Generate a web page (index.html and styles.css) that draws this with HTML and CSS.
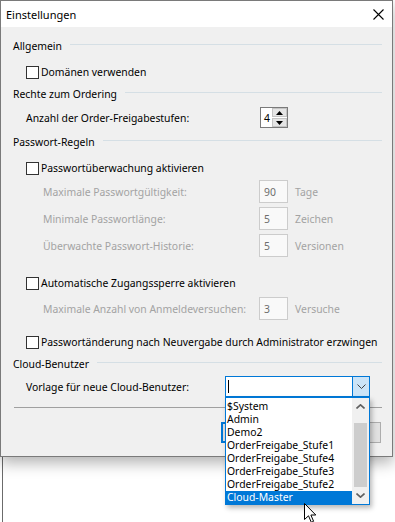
FILE: index.html
```html
<!DOCTYPE html>
<html lang="de">
<head>
<meta charset="UTF-8">
<title>Einstellungen</title>
<link rel="stylesheet" href="styles.css">
</head>
<body>
  <div class="backwin"></div>

  <div class="dialog">
    <div class="titlebar">
      <span>Einstellungen</span>
      <svg class="close" width="11" height="11" viewBox="0 0 11 11"><path d="M0.5 0.5 L10.5 10.5 M10.5 0.5 L0.5 10.5" stroke="#000" stroke-width="1.1" fill="none"/></svg>
    </div>

    <div class="content">
      <div class="row section mt9"><span>Allgemein</span><i class="rule"></i></div>
      <div class="row check mt6"><span class="box"></span>Domänen verwenden</div>

      <div class="row section mt2"><span>Rechte zum Ordering</span><i class="rule"></i></div>
      <div class="row plain spinrow mt3">
        <span class="lbl-wide">Anzahl der Order-Freigabestufen:</span>
        <div class="spin">
          <span class="spin-val">4</span>
          <div class="spin-btns">
            <span class="spin-btn"><svg width="7" height="4" viewBox="0 0 7 4"><path d="M0 4 L3.5 0 L7 4 Z" fill="#000"/></svg></span>
            <span class="spin-btn"><svg width="7" height="4" viewBox="0 0 7 4"><path d="M0 0 L3.5 4 L7 0 Z" fill="#000"/></svg></span>
          </div>
        </div>
      </div>

      <div class="row section mt4"><span>Passwort-Regeln</span><i class="rule"></i></div>
      <div class="row check mt6"><span class="box"></span>Passwortüberwachung aktivieren</div>
      <div class="row field mt2"><span class="lbl">Maximale Passwortgültigkeit:</span><span class="tbox">90</span><span class="unit">Tage</span></div>
      <div class="row field mt4"><span class="lbl">Minimale Passwortlänge:</span><span class="tbox">5</span><span class="unit">Zeichen</span></div>
      <div class="row field mt4"><span class="lbl">Überwachte Passwort-Historie:</span><span class="tbox">5</span><span class="unit">Versionen</span></div>

      <div class="row check mt16"><span class="box"></span>Automatische Zugangssperre aktivieren</div>
      <div class="row field mt4"><span class="lbl">Maximale Anzahl von Anmeldeversuchen:</span><span class="tbox">3</span><span class="unit">Versuche</span></div>

      <div class="row check mt12"><span class="box"></span>Passwortänderung nach Neuvergabe durch Administrator erzwingen</div>

      <div class="row section mt2"><span>Cloud-Benutzer</span><i class="rule"></i></div>
      <div class="row plain comborow mt2">
        <span class="lbl-combo">Vorlage für neue Cloud-Benutzer:</span>
        <div class="combo">
          <span class="combo-text"><i class="caret"></i></span>
          <span class="combo-btn"><svg width="9" height="5" viewBox="0 0 9 5"><path d="M0.5 0.5 L4.5 4.5 L8.5 0.5" stroke="#444" stroke-width="1" fill="none"/></svg></span>
        </div>
      </div>

      <div class="separator"></div>

      <!-- OK / Abbrechen, covered by the open list -->
      <div class="buttons">
        <span class="btn btn-default"></span>
        <span class="btn"></span>
      </div>
    </div>
  </div>

  <div class="droplist">
    <ul class="items">
      <li>$System</li>
      <li>Admin</li>
      <li>Demo2</li>
      <li>OrderFreigabe_Stufe1</li>
      <li>OrderFreigabe_Stufe4</li>
      <li>OrderFreigabe_Stufe3</li>
      <li>OrderFreigabe_Stufe2</li>
      <li class="selected">Cloud-Master</li>
    </ul>
    <div class="vscroll">
      <span class="sb-arrow"><svg width="9" height="5" viewBox="0 0 9 5"><path d="M0.5 4.5 L4.5 0.8 L8.5 4.5" stroke="#606060" stroke-width="1.6" fill="none"/></svg></span>
      <span class="sb-track"><i class="sb-thumb"></i></span>
      <span class="sb-arrow"><svg width="9" height="5" viewBox="0 0 9 5"><path d="M0.5 0.5 L4.5 4.2 L8.5 0.5" stroke="#606060" stroke-width="1.6" fill="none"/></svg></span>
    </div>
  </div>

  <svg class="cursor" width="13" height="21" viewBox="0 0 13 21">
    <path d="M0.5 0.5 L0.5 16.5 L4.5 12.8 L7.3 19.3 L9.6 18.3 L6.9 12 L11.8 12 Z" fill="#fff" stroke="#000" stroke-width="1"/>
  </svg>
</body>
</html>
```

FILE: styles.css
```css
body {
  margin: 0;
  background: #fff;
  font-family: "Noto Sans", "Open Sans", sans-serif;
  font-size: 10.4px;
  color: #000;
}

/* window lying behind the dialog */
.backwin {
  margin-left: 2px;
  height: 522px;
  border-left: 1px solid #6b6b6b;
}

.dialog {
  position: absolute;
  left: 0;
  top: 0;
  width: 393px;
  box-sizing: border-box;
  border: 1px solid #7a7a7a;
  background: #f0f0f0;
  box-shadow: 0 6px 14px rgba(0, 0, 0, 0.3);
}

.titlebar {
  height: 26px;
  background: #fff;
  display: flex;
  align-items: center;
  justify-content: space-between;
  padding: 0 8px 0 5px;
  font-size: 11px;
}
.titlebar .close {
  display: block;
}

.content {
  padding: 0 10px 13px 12px;
}

.row {
  display: flex;
  align-items: center;
  white-space: nowrap;
}
.mt2 { margin-top: 2px; }
.mt3 { margin-top: 3px; }
.mt4 { margin-top: 4px; }
.mt6 { margin-top: 6px; }
.mt9 { margin-top: 9px; }
.mt12 { margin-top: 12px; }
.mt16 { margin-top: 16px; }

.section {
  height: 20px;
}
.section .rule {
  flex: 1;
  height: 1px;
  background: #d5dfe5;
  margin: 0 0 3px 8px;
}

.check {
  height: 20px;
  margin-left: 13px;
}
.box {
  flex-shrink: 0;
  width: 13px;
  height: 13px;
  box-sizing: border-box;
  border: 1px solid #333;
  background: #fff;
  margin-right: 2px;
}

.field {
  height: 23px;
  margin-left: 30px;
  color: #a3a3a3;
}
.field .lbl {
  width: 216px;
}
.tbox {
  width: 29px;
  height: 23px;
  box-sizing: border-box;
  border: 1px solid #cccccc;
  background: #f9f9f9;
  color: #6d6d6d;
  padding-left: 4px;
  display: flex;
  align-items: center;
}
.unit {
  margin-left: 7px;
}

.plain {
  margin-left: 13px;
}
.spinrow {
  height: 21px;
}
.lbl-wide {
  width: 234px;
}
.spin {
  width: 28px;
  height: 21px;
  box-sizing: border-box;
  border: 1px solid #7a7a7a;
  background: #fff;
  display: flex;
}
.spin-val {
  flex: 1;
  padding-left: 3px;
  display: flex;
  align-items: center;
}
.spin-btns {
  width: 15px;
  display: flex;
  flex-direction: column;
  gap: 1px;
}
.spin-btn {
  flex: 1;
  background: #e5e5e5;
  border: 1px solid #c4c4c4;
  display: flex;
  align-items: center;
  justify-content: center;
}
.spin-btn svg {
  display: block;
}

.comborow {
  height: 21px;
}
.lbl-combo {
  width: 199px;
}
.combo {
  width: 145px;
  height: 21px;
  box-sizing: border-box;
  border: 1px solid #0078d7;
  background: #fff;
  display: flex;
}
.combo-text {
  flex: 1;
  display: flex;
  align-items: center;
  padding-left: 2px;
}
.caret {
  width: 1px;
  height: 13px;
  background: #000;
}
.combo-btn {
  width: 16px;
  background: #cce4f7;
  border-left: 1px solid #0078d7;
  display: flex;
  align-items: center;
  justify-content: center;
}

.separator {
  margin: 10px 0 0 1px;
  height: 1px;
  background: #a0a0a0;
}

.buttons {
  margin-top: 14px;
  display: flex;
  justify-content: flex-end;
  gap: 6px;
  padding-right: 1px;
}
.btn {
  width: 77px;
  height: 21px;
  box-sizing: border-box;
  border: 1px solid #adadad;
  background: #e1e1e1;
}
.btn-default {
  border: 2px solid #0078d7;
}

/* open drop-down of the combo box */
.droplist {
  position: absolute;
  left: 225px;
  top: 397px;
  width: 145px;
  height: 108px;
  box-sizing: border-box;
  border: 1px solid #0078d7;
  background: #fff;
  box-shadow: 2px 3px 5px rgba(0, 0, 0, 0.28);
  display: flex;
}
.items {
  list-style: none;
  margin: 0;
  padding: 2px 0 0;
  flex: 1;
}
.items li {
  height: 13px;
  line-height: 13px;
  padding-left: 1px;
}
.items li.selected {
  background: #0078d7;
  color: #fff;
}
.vscroll {
  width: 17px;
  background: #f0f0f0;
  display: flex;
  flex-direction: column;
}
.sb-arrow {
  height: 17px;
  display: flex;
  align-items: center;
  justify-content: center;
}
.sb-track {
  flex: 1;
  display: flex;
  flex-direction: column;
  padding: 8px 2px 0;
}
.sb-thumb {
  height: 64px;
  background: #cdcdcd;
}

.cursor {
  position: absolute;
  left: 304px;
  top: 503px;
}
```
